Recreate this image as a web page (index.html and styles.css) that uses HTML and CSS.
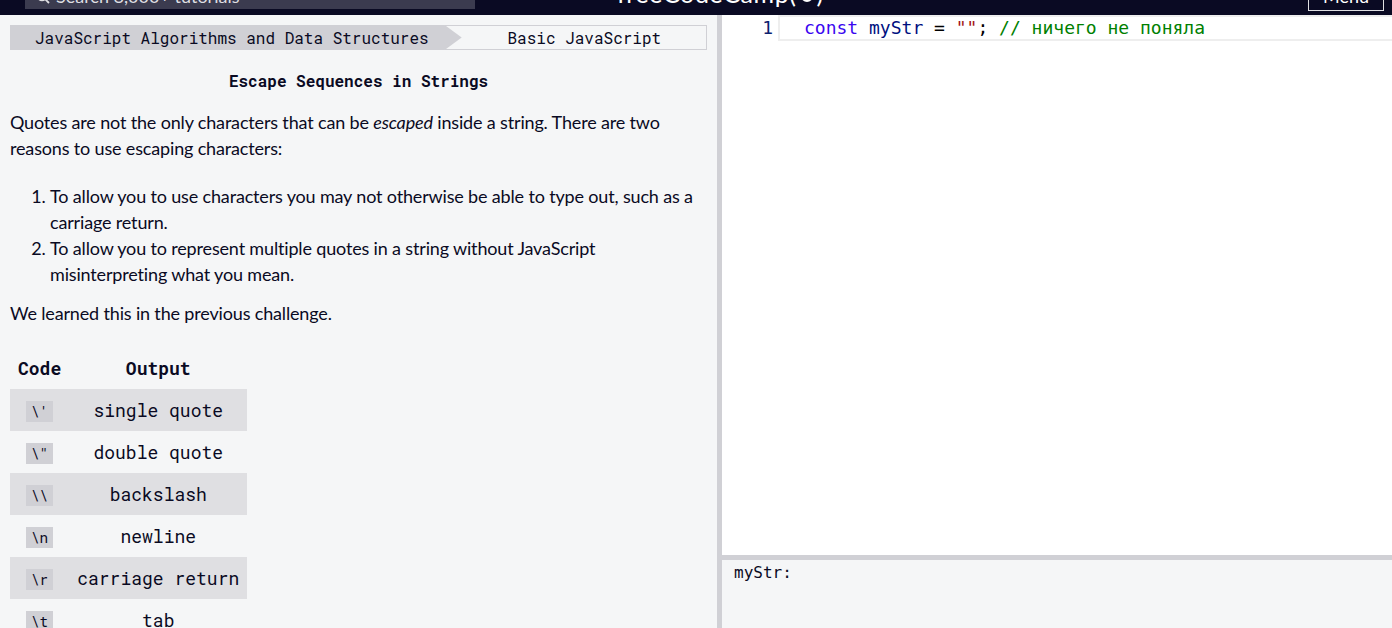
FILE: index.html
```html
<!DOCTYPE html>
<html lang="en">
<head>
<meta charset="utf-8">
<title>Escape Sequences in Strings</title>
<link rel="stylesheet" href="styles.css">
</head>
<body>
<div class="page">
  <header class="nav">
    <div class="search">
      <svg class="search-icon" width="14" height="14" viewBox="0 0 14 14"><circle cx="6" cy="6" r="4.5" fill="none" stroke="#dfdfe2" stroke-width="1.6"/><line x1="9.3" y1="9.3" x2="13" y2="13" stroke="#dfdfe2" stroke-width="1.8"/></svg>
      <span>Search 8,000+ tutorials</span>
    </div>
    <div class="logo">freeCodeCamp<span class="paren">(</span><svg class="flame" width="14" height="20" viewBox="0 0 14 20"><path d="M7 1c1 4 6 6 6 12a6 6 0 0 1-12 0c0-3 2-5 3-6 0 2 1 3 2 3 0-3-1-5 1-9z" fill="#fff"/></svg><span class="paren">)</span></div>
    <button class="menu">Menu</button>
  </header>
  <main class="split">
    <section class="instructions">
      <nav class="breadcrumbs">
        <div class="crumb-main">JavaScript Algorithms and Data Structures</div>
        <div class="crumb-sub">Basic JavaScript</div>
      </nav>
      <h1 class="title">Escape Sequences in Strings</h1>
      <p>Quotes are not the only characters that can be <em>escaped</em> inside a string. There are two reasons to use escaping characters:</p>
      <ol>
        <li>To allow you to use characters you may not otherwise be able to type out, such as a carriage return.</li>
        <li>To allow you to represent multiple quotes in a string without JavaScript misinterpreting what you mean.</li>
      </ol>
      <p>We learned this in the previous challenge.</p>
      <table class="esc">
        <thead><tr><th>Code</th><th>Output</th></tr></thead>
        <tbody>
          <tr><td><code>\'</code></td><td>single quote</td></tr>
          <tr><td><code>\"</code></td><td>double quote</td></tr>
          <tr><td><code>\\</code></td><td>backslash</td></tr>
          <tr><td><code>\n</code></td><td>newline</td></tr>
          <tr><td><code>\r</code></td><td>carriage return</td></tr>
          <tr><td><code>\t</code></td><td>tab</td></tr>
          <tr><td><code>\b</code></td><td>word boundary</td></tr>
        </tbody>
      </table>
    </section>
    <div class="vdiv"></div>
    <section class="right">
      <div class="editor">
        <div class="gutter"><div class="ln">1</div></div>
        <div class="lines">
          <div class="line"><span class="kw">const</span> <span class="var">myStr</span> = <span class="str">""</span>; <span class="cmt">// ничего не поняла</span></div>
        </div>
      </div>
      <div class="hdiv"></div>
      <div class="output">myStr:</div>
    </section>
  </main>
</div>
</body>
</html>
```
FILE: styles.css
```css
html, body {
  margin: 0;
  padding: 0;
  height: 100%;
  overflow: hidden;
}
body {
  font-family: "Lato", "Noto Sans", sans-serif;
  color: #0a0a23;
  background: #f5f6f7;
}
.page {
  display: flex;
  flex-direction: column;
  height: 100vh;
}
.nav {
  flex: none;
  height: 15px;
  background: #0a0a23;
  display: flex;
  align-items: flex-end;
  overflow: hidden;
}
.search {
  flex: none;
  margin-left: 25px;
  margin-bottom: 6px;
  width: 450px;
  height: 32px;
  box-sizing: border-box;
  background: #3b3b4f;
  display: flex;
  align-items: flex-end;
  gap: 6px;
  padding: 0 0 4px 11px;
  color: #dfdfe2;
  font-size: 18px;
  line-height: 18px;
}
.search-icon {
  margin-bottom: 1px;
}
.logo {
  flex: none;
  margin-left: 142px;
  margin-bottom: 9px;
  color: #fff;
  font-size: 25px;
  line-height: 25px;
  display: flex;
  align-items: flex-end;
  letter-spacing: 0.6px;
}
.flame {
  margin: 0 3px 3px;
}
.menu {
  flex: none;
  margin-left: auto;
  margin-right: 8px;
  margin-bottom: 4px;
  width: 76px;
  height: 34px;
  box-sizing: border-box;
  background: transparent;
  border: 1px solid #dfdfe2;
  color: #fff;
  font-family: "Lato", sans-serif;
  font-size: 18px;
  line-height: 18px;
  display: flex;
  align-items: flex-end;
  justify-content: center;
  padding: 0 0 5px;
}
.split {
  flex: 1;
  display: flex;
  min-height: 0;
}
.instructions {
  flex: none;
  width: 717px;
  box-sizing: border-box;
  padding: 10px 10px 0;
  overflow: hidden;
  background: #f5f6f7;
}
.breadcrumbs {
  display: flex;
  height: 25px;
  font-family: "Roboto Mono", "Liberation Mono", monospace;
  font-size: 16px;
  color: #0a0a23;
}
.crumb-main {
  position: relative;
  z-index: 1;
  background: #d0d0d5;
  padding: 0 33px 0 25px;
  line-height: 25px;
  white-space: nowrap;
  clip-path: polygon(0 0, calc(100% - 17px) 0, 100% 50%, calc(100% - 17px) 100%, 0 100%);
}
.crumb-sub {
  flex: 1;
  margin-left: -17px;
  padding-left: 17px;
  border: 1px solid #d0d0d5;
  line-height: 23px;
  text-align: center;
  white-space: nowrap;
}
.title {
  margin: 20px 0 17px;
  font-family: "Roboto Mono", "Liberation Mono", monospace;
  font-size: 16px;
  line-height: 22px;
  font-weight: 700;
  text-align: center;
}
p {
  margin: 0 0 21.6px;
  font-size: 18px;
  line-height: 26px;
  letter-spacing: -0.16px;
}
ol {
  margin: 0 0 13px;
  padding-left: 40px;
  font-size: 18px;
  line-height: 26px;
  letter-spacing: -0.16px;
}
.esc {
  border-collapse: collapse;
  font-family: "Roboto Mono", "Liberation Mono", monospace;
  font-size: 18px;
  line-height: 26px;
  color: #0a0a23;
}
.esc th, .esc td {
  padding: 8px;
  text-align: center;
  white-space: nowrap;
}
.esc th {
  font-weight: 700;
}
.esc tbody tr:nth-child(odd) {
  background: #dfdfe2;
}
.esc code {
  font-family: "Roboto Mono", "Liberation Mono", monospace;
  font-size: 14.4px;
  line-height: 20px;
  background: #d0d0d5;
  padding: 1px 5px;
}
.vdiv {
  flex: none;
  width: 5px;
  background: #d0d0d5;
}
.right {
  flex: 1;
  display: flex;
  flex-direction: column;
  min-width: 0;
}
.editor {
  flex: none;
  height: 540px;
  background: #fff;
  display: flex;
  font-family: "DejaVu Sans Mono", monospace;
  font-size: 18px;
}
.gutter {
  flex: none;
  width: 56px;
}
.ln {
  height: 26px;
  line-height: 26px;
  text-align: right;
  padding-right: 5px;
  color: #0b216f;
}
.lines {
  flex: 1;
}
.line {
  height: 26px;
  box-sizing: border-box;
  border: 2px solid #eeeeee;
  border-right: 0;
  padding-left: 24px;
  line-height: 22px;
  white-space: pre;
  color: #000;
}
.kw { color: #3a06f0; }
.var { color: #001080; }
.str { color: #a31515; }
.cmt { color: #008000; }
.hdiv {
  flex: none;
  height: 5px;
  background: #d0d0d5;
}
.output {
  flex: 1;
  background: #f5f6f7;
  padding: 3px 12px;
  font-family: "DejaVu Sans Mono", monospace;
  font-size: 16px;
  line-height: 20px;
  color: #0a0a23;
}
```
